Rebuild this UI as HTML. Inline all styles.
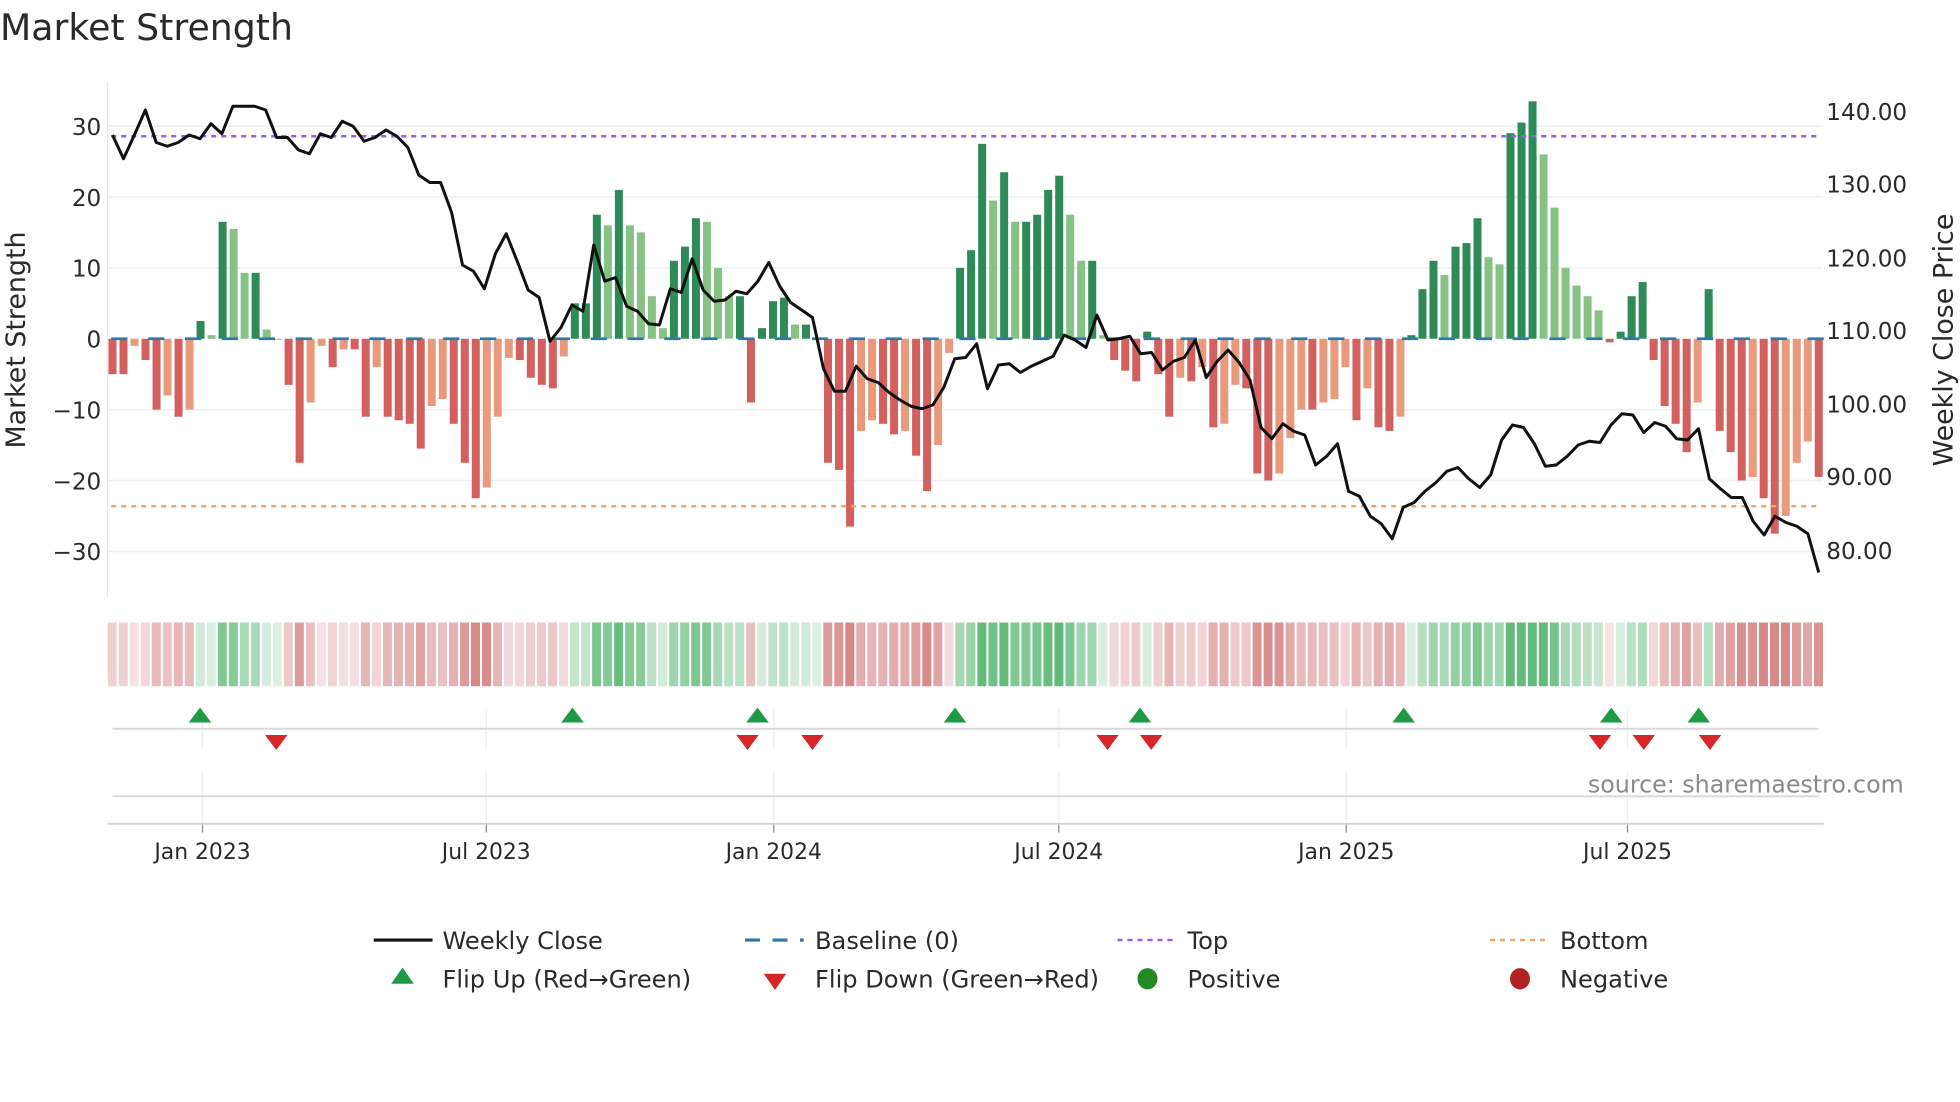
<!DOCTYPE html>
<html><head><meta charset="utf-8"><style>
html,body{margin:0;padding:0;background:#fff;width:1960px;height:1102px;overflow:hidden}
svg{display:block}
text{font-family:"DejaVu Sans","Liberation Sans",sans-serif;fill:#2a2a2a}
</style></head><body>
<svg id="s" width="1960" height="1102" viewBox="0 0 1568 881.6" xmlns="http://www.w3.org/2000/svg">
<text x="0" y="32" font-size="29">Market Strength</text>
<g id="grid"></g>
<g id="bars"></g>
<g id="strip"></g>
<g id="lines"></g>
<g id="axes"></g>
<text x="1523" y="634" font-size="19" fill="#8a8a8a" style="fill:#8a8a8a" text-anchor="end">source: sharemaestro.com</text>
<line x1="299" y1="752" x2="346" y2="752" stroke="#111" stroke-width="2.5"/>
<text x="354" y="759" font-size="19.3">Weekly Close</text>
<line x1="596" y1="752" x2="643" y2="752" stroke="#2a7ab0" stroke-width="2.5" stroke-dasharray="12,10"/>
<text x="652" y="759" font-size="19.3">Baseline (0)</text>
<line x1="894" y1="752" x2="941" y2="752" stroke="#9a5fe0" stroke-width="2" stroke-dasharray="4,4"/>
<text x="950" y="759" font-size="19.3">Top</text>
<line x1="1192" y1="752" x2="1239" y2="752" stroke="#f0a868" stroke-width="2" stroke-dasharray="4,4"/>
<text x="1248" y="759" font-size="19.3">Bottom</text>
<polygon points="322,774 331,787 313,787" fill="#1e9a45"/>
<text x="354" y="790" font-size="19.3">Flip Up (Red→Green)</text>
<polygon points="611,779 629,779 620,792" fill="#d62728"/>
<text x="652" y="790" font-size="19.3">Flip Down (Green→Red)</text>
<ellipse cx="918" cy="783" rx="8" ry="8.5" fill="#228b22"/>
<text x="950" y="790" font-size="19.3">Positive</text>
<ellipse cx="1216" cy="783" rx="8" ry="8.5" fill="#b22222"/>
<text x="1248" y="790" font-size="19.3">Negative</text>
</svg>
<script>
const NS="http://www.w3.org/2000/svg";
function el(g,t,a,txt){const e=document.createElementNS(NS,t);for(const k in a)e.setAttribute(k,a[k]);if(txt!==undefined)e.textContent=txt;document.getElementById(g).appendChild(e);return e;}
const v=[-5,-5,-1,-3,-10,-8,-11,-10,2.5,0.5,16.5,15.5,9.3,9.3,1.3,0,-6.5,-17.5,-9,-1,-4,-1.5,-1.5,-11,-4,-11,-11.5,-12,-15.5,-9.5,-8.5,-12,-17.5,-22.5,-21,-11,-2.7,-3,-5.5,-6.5,-7,-2.5,5,5,17.5,16,21,16,15,6,1.5,11,13,17,16.5,10,6,6,-9,1.5,5.3,5.8,2,2,0,-17.5,-18.5,-26.5,-13,-11.5,-12,-13.5,-13,-16.5,-21.5,-15,-2,10,12.5,27.5,19.5,23.5,16.5,16.5,17.5,21,23,17.5,11,11,0.5,-3,-4.5,-6,1,-5,-11,-5.5,-6,-4,-12.5,-12,-6.5,-7,-19,-20,-19,-14,-10,-10,-9,-8.5,-4,-11.5,-7,-12.5,-13,-11,0.5,7,11,9,13,13.5,17,11.5,10.5,29,30.5,33.5,26,18.5,10,7.5,6,4,-0.5,1,6,8,-3,-9.5,-12,-16,-9,7,-13,-16,-20,-19.5,-22.5,-27.5,-25,-17.5,-14.5,-19.5];
const p=[108,127,108,88,114,117,114,108,111,99,107,85,85,85,88,110,110,120,123,107,110,97,101,113,110,104,109,118,140,146,146,170,212,217,231,203,187,209,232,238,273,262,244,249,196,225,222,245,249,259,260,231,234,207,232,241,240,233,235,225,210,229,242,248,254,295,313,313,293,303,306,314,320,325,327,324,310,287,286,275,311,292,291,298,293,289,285,268,272,278,252,272,271,269,283,282,296,289,286,272,302,289,280,290,304,342,351,339,345,348,372,365,355,393,397,413,419,431,406,402,393,386,377,374,383,390,380,352,340,342,355,373,372,365,356,353,354,340,331,332,346,338,341,351,352,343,383,391,398,398,417,428,413,418,421,427,458];
const x0=90,dx=(1455-90)/155,Y0=271,k=5.67;
[30,20,10,-10,-20,-30].forEach(t=>{el('grid','line',{x1:87,x2:1458,y1:Y0-t*k,y2:Y0-t*k,stroke:'#eef0f3','stroke-width':1.3});});
[30,20,10,0,-10,-20,-30].forEach(t=>{el('axes','text',{x:81,y:Y0-t*k+7,'font-size':18.5,'text-anchor':'end'},t<0?'\u2212'+(-t):''+t);});
[[140,89],[130,147],[120,206],[110,264],[100,323],[90,381],[80,440]].forEach(a=>{el('axes','text',{x:1461,y:a[1]+7,'font-size':18.5},a[0].toFixed(2));});
el('axes','line',{x1:86,x2:86,y1:65,y2:478,stroke:'#e6e8eb','stroke-width':1});
el('axes','text',{x:0,y:0,'font-size':21.5,'text-anchor':'middle',transform:'translate(20,272) rotate(-90)'},'Market Strength');
el('axes','text',{x:0,y:0,'font-size':21.5,'text-anchor':'middle',transform:'translate(1562,272) rotate(-90)'},'Weekly Close Price');
v.forEach((val,i)=>{const x=x0+i*dx;const pr=i?v[i-1]:0;let c;
 if(val>=0)c=(val>=pr)?'#2e8b57':'#86c283';else c=(val<=pr)?'#d1605e':'#e99a7d';
 const h=Math.abs(val)*k;el('bars','rect',{x:x-3.2,y:val>=0?Y0-h:Y0,width:6.4,height:Math.max(h,0.8),fill:c});
 const a=Math.min(1,0.22+Math.abs(val)/28);let sc=val>=0?`rgba(60,170,90,${a*0.8})`:`rgba(200,90,90,${a*0.72})`;
 el('strip','rect',{x:x-3.8,y:498,width:7.2,height:51,fill:sc});
});
for(let xx=89;xx<1458;xx+=29.5)el('lines','line',{x1:xx,x2:xx+13,y1:Y0,y2:Y0,stroke:'#2a7ab0','stroke-width':2.2});
el('lines','line',{x1:89,x2:1457,y1:109,y2:109,stroke:'#9a5fe0','stroke-width':2,'stroke-dasharray':'4,4'});
el('lines','line',{x1:89,x2:1457,y1:405,y2:405,stroke:'#f0a868','stroke-width':2,'stroke-dasharray':'4,4'});
const pdx=(1455-90)/(p.length-1);
let d='';p.forEach((y,i)=>{const x=x0+i*pdx;d+=(i?'L':'M')+x.toFixed(1)+','+y;});
el('lines','path',{d:d,fill:'none',stroke:'#111','stroke-width':2.4,'stroke-linejoin':'round'});
[[162,'Jan 2023'],[389,'Jul 2023'],[619,'Jan 2024'],[847,'Jul 2024'],[1077,'Jan 2025'],[1302,'Jul 2025']].forEach(a=>{
 el('axes','line',{x1:a[0],x2:a[0],y1:567,y2:599,stroke:'#eceef1','stroke-width':1});
 el('axes','line',{x1:a[0],x2:a[0],y1:617,y2:658,stroke:'#eceef1','stroke-width':1});
 el('axes','line',{x1:a[0],x2:a[0],y1:659,y2:666,stroke:'#888','stroke-width':1});
 el('axes','text',{x:a[0],y:687,'font-size':17.5,'text-anchor':'middle'},a[1]);});
el('axes','line',{x1:90,x2:1455,y1:583,y2:583,stroke:'#d6d8db','stroke-width':1.5});
el('axes','line',{x1:90,x2:1455,y1:637,y2:637,stroke:'#d6d8db','stroke-width':1.5});
el('axes','line',{x1:86,x2:1459,y1:659,y2:659,stroke:'#d0d2d5','stroke-width':1.5});
[160,458,606,764,912,1123,1289,1359].forEach(x=>el('axes','polygon',{points:`${x},566 ${x+9},578 ${x-9},578`,fill:'#1e9a45'}));
[221,598,650,886,921,1280,1315,1368].forEach(x=>el('axes','polygon',{points:`${x-9},588 ${x+9},588 ${x},600`,fill:'#d62728'}));
</script>
</body></html>
